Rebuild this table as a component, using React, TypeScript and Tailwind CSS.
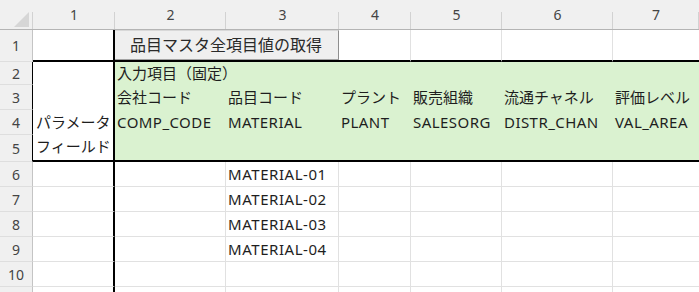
import React from "react";

const FONT = "font-['Noto_Sans','Noto_Sans_CJK_JP',sans-serif]";

type RowProps = { n?: number; h: string; hdrClass?: string; children: React.ReactNode };

function Row({ n, h, hdrClass, children }: RowProps) {
  return (
    <div className={`grid grid-cols-[33px_82px_111px_113px_72px_91px_111px_86px] ${h}`}>
      <div
        className={`flex items-center justify-center bg-[#f0f0f0] border-b border-b-[#dedede] border-r text-[14px] text-[#444] ${
          hdrClass ?? "border-r-[#c4c4c4]"
        }`}
      >
        {n}
      </div>
      {children}
    </div>
  );
}

function Cell({ text, last }: { text?: string; last?: boolean }) {
  return (
    <div
      className={`flex items-center pl-[2px] whitespace-nowrap tracking-[0.55px] text-[15px] text-[#1e1e1e] border-b border-b-[#e1e1e1] ${
        last ? "" : "border-r border-r-[#e1e1e1]"
      }`}
    >
      {text}
    </div>
  );
}

function ColHead({ label }: { label: string }) {
  return (
    <div className="flex items-center justify-center pb-[1px] text-[14px] text-[#444] bg-[linear-gradient(#d2d2d2,#d2d2d2)] bg-no-repeat bg-right-bottom bg-[length:1px_17px]">
      {label}
    </div>
  );
}

export default function App() {
  const materials = ["MATERIAL-01", "MATERIAL-02", "MATERIAL-03", "MATERIAL-04", ""];
  return (
    <div className={`w-[699px] h-[292px] overflow-hidden bg-white ${FONT}`}>
      {/* column headers */}
      <div className="grid grid-cols-[33px_82px_111px_113px_72px_91px_111px_86px] h-[30px] bg-[#f0f0f0] border-b border-b-[#b4b4b4]">
        <div className="flex items-end justify-end pr-[2px] pb-[1px] bg-[linear-gradient(#d2d2d2,#d2d2d2)] bg-no-repeat bg-right-bottom bg-[length:1px_17px]">
          <svg width="18" height="16" viewBox="0 0 18 16">
            <polygon points="1,15 16,15 16,0" fill="#d6d6d6" />
          </svg>
        </div>
        {["1", "2", "3", "4", "5", "6", "7"].map((c) => (
          <ColHead key={c} label={c} />
        ))}
      </div>

      {/* row 1: action button */}
      <Row n={1} h="h-[32px]">
        <div className="border-r-2 border-r-black border-b-2 border-b-black" />
        <div className="col-span-2 border-b-2 border-b-black">
          <div className="h-full flex items-center justify-center bg-[#efefef] border-t border-t-[#d8d8d8] border-r border-r-[#8e8e8e] border-b border-b-[#a2a2a2] text-[16px] text-[#2a2a2a] pr-[1px]">
            品目マスタ全項目値の取得
          </div>
        </div>
        <div className="border-r border-r-[#e1e1e1] border-b-2 border-b-black" />
        <div className="border-r border-r-[#e1e1e1] border-b-2 border-b-black" />
        <div className="border-r border-r-[#e1e1e1] border-b-2 border-b-black" />
        <div className="border-b-2 border-b-black" />
      </Row>

      {/* rows 2-5: fixed input block */}
      <Row n={2} h="h-[23px]" hdrClass="border-r-black">
        <div className="border-r-2 border-r-black" />
        <div className="col-span-6 flex items-center pl-[2px] bg-[#daf2d0] text-[15px] text-[#1e1e1e] whitespace-nowrap">
          入力項目（固定）
        </div>
      </Row>
      <Row n={3} h="h-[25px]" hdrClass="border-r-black">
        <div className="border-r-2 border-r-black" />
        {["会社コード", "品目コード", "プラント", "販売組織", "流通チャネル", "評価レベル"].map((t) => (
          <div
            key={t}
            className="flex items-center pl-[2px] bg-[#daf2d0] text-[15px] text-[#1e1e1e] whitespace-nowrap"
          >
            {t}
          </div>
        ))}
      </Row>
      <Row n={4} h="h-[25px]" hdrClass="border-r-black">
        <div className="flex items-center pl-[3px] border-r-2 border-r-black text-[15px] text-[#1e1e1e] whitespace-nowrap">
          パラメータ
        </div>
        {["COMP_CODE", "MATERIAL", "PLANT", "SALESORG", "DISTR_CHAN", "VAL_AREA"].map((t) => (
          <div
            key={t}
            className="flex items-center pl-[2px] bg-[#daf2d0] tracking-[0.45px] text-[15px] text-[#1e1e1e] whitespace-nowrap"
          >
            {t}
          </div>
        ))}
      </Row>
      <Row n={5} h="h-[27px]" hdrClass="border-r-black">
        <div className="flex items-center pl-[3px] pb-[2px] border-r-2 border-r-black border-b-2 border-b-black text-[15px] text-[#1e1e1e] whitespace-nowrap">
          フィールド
        </div>
        <div className="col-span-6 bg-[#daf2d0] border-b-2 border-b-black" />
      </Row>

      {/* rows 6-10: data */}
      {materials.map((m, i) => (
        <Row key={i} n={i + 6} h="h-[25px]">
          <div className="border-r-2 border-r-black border-b border-b-[#e1e1e1]" />
          <Cell />
          <Cell text={m} />
          <Cell />
          <Cell />
          <Cell />
          <Cell last />
        </Row>
      ))}

      {/* row 11, only its top edge is in view */}
      <Row h="h-[25px]">
        <div className="border-r-2 border-r-black" />
        <div className="border-r border-r-[#e1e1e1]" />
        <div className="border-r border-r-[#e1e1e1]" />
        <div className="border-r border-r-[#e1e1e1]" />
        <div className="border-r border-r-[#e1e1e1]" />
        <div className="border-r border-r-[#e1e1e1]" />
        <div />
      </Row>
    </div>
  );
}
